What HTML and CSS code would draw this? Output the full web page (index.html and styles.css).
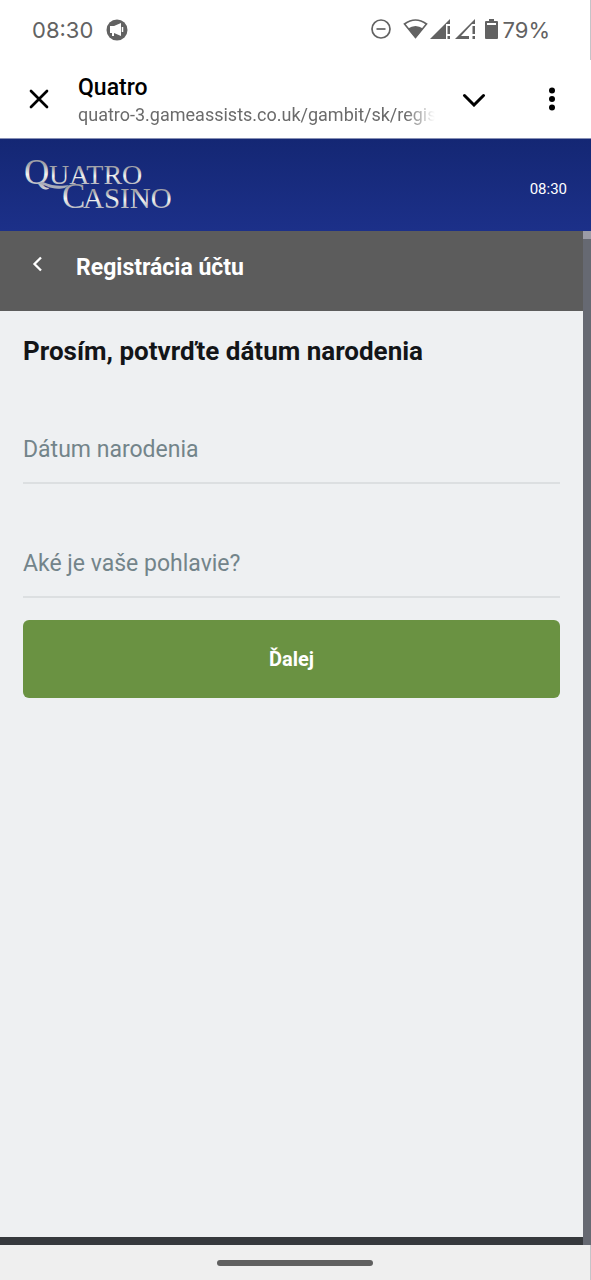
FILE: index.html
```html
<!DOCTYPE html>
<html lang="sk">
<head>
<meta charset="utf-8">
<meta name="viewport" content="width=device-width, initial-scale=1">
<title>Quatro</title>
<link rel="stylesheet" href="styles.css">
</head>
<body>
<div class="screen">
  <div class="status">
    <span class="status-time">08:30</span>
    <svg class="status-app" width="22" height="22" viewBox="0 0 22 22" aria-hidden="true">
      <circle cx="11" cy="11" r="10.5" fill="#626262"/>
      <path d="M4 7h4l7-3v13l-7-3v3H6v-3H4z" fill="#fff"/>
      <path d="M16.500 8v5" stroke="#fff" stroke-width="1.500"/>
    </svg>
    <svg class="status-icons" width="130" height="24" viewBox="0 0 130 24" aria-hidden="true">
      <g fill="none" stroke="#626262" stroke-width="1.700">
        <circle cx="11" cy="11" r="9"/>
        <path d="M6.500 11h9"/>
        <path d="M34.500 6Q45.500-2 56.500 6L45.500 19.500z"/>
      </g>
      <g fill="#626262">
        <path d="M38 10.500Q45.500 5.500 53 10.500L45.500 20z"/>
        <path d="M60 21L80 1v5h-4v15z"/>
        <path d="M77.500 8h2.500v8h-2.500zM77.500 18h2.500v3h-2.500zM102.500 8h2.500v8h-2.500zM102.500 18h2.500v3h-2.500z"/>
        <path d="M85 21L105 1v5h-3L91 18h8v3z"/>
        <path fill-rule="evenodd" d="M119 1h5v2h3q1 0 1 1v16q0 1-1 1h-11q-1 0-1-1V4q0-1 1-1h3zM117 5v2h9V5z"/>
      </g>
    </svg>
    <span class="status-battery">79%</span>
  </div>

  <div class="toolbar">
    <button class="icon-button" type="button" aria-label="Zavrieť">
      <svg width="22" height="22" viewBox="0 0 22 22"><path d="M3 3l16 16M19 3L3 19" stroke="#000" stroke-width="2.700" stroke-linecap="round"/></svg>
    </button>
    <div class="page-info">
      <div class="page-title">Quatro</div>
      <div class="page-url">quatro-3.gameassists.co.uk/gambit/sk/regis</div>
    </div>
    <button class="icon-button" type="button" aria-label="Rozbaliť">
      <svg width="24" height="16" viewBox="0 0 24 16"><path d="M2.500 4.500L12 14l9.500-9.500" fill="none" stroke="#000" stroke-width="3" stroke-linecap="round"/></svg>
    </button>
    <button class="icon-button" type="button" aria-label="Viac">
      <svg width="8" height="24" viewBox="0 0 8 24"><circle cx="4" cy="3.500" r="3"/><circle cx="4" cy="12" r="3"/><circle cx="4" cy="20.500" r="3"/></svg>
    </button>
  </div>

  <header class="brand">
    <svg class="logo" width="152" height="56" viewBox="0 0 152 56" role="img" aria-label="Quatro Casino">
      <defs>
        <linearGradient id="silver" x1="0" y1="0" x2="0" y2="1">
          <stop offset="0" stop-color="#8d8f9b"/>
          <stop offset=".3" stop-color="#a5a6ac"/>
          <stop offset=".55" stop-color="#f4f4f2"/>
          <stop offset=".8" stop-color="#b9bac2"/>
          <stop offset="1" stop-color="#dcdce0"/>
        </linearGradient>
      </defs>
      <g class="logo-text" fill="url(#silver)">
        <text class="logo-large" x="0" y="27">Q</text>
        <text class="logo-first" x="25" y="27">UATRO</text>
        <text class="logo-large" x="38" y="51">C</text>
        <text class="logo-second" x="59" y="51">ASINO</text>
      </g>
      <path d="M13 26C22 28 27 33 38 31.500C42 31 43 29 45 28C40 28.500 31 30.500 19 25z" fill="#a9adba"/>
    </svg>
    <span class="clock">08:30</span>
  </header>

  <div class="viewport">
    <div class="page">
      <div class="heading">
        <button class="back" type="button" aria-label="Späť">
          <svg width="12" height="18" viewBox="0 0 12 18"><path d="M9 2.500L2.500 9L9 15.500" fill="none" stroke="#fff" stroke-width="2.300"/></svg>
        </button>
        <h1 class="heading-title">Registrácia účtu</h1>
      </div>
      <form class="form">
        <h2 class="form-title">Prosím, potvrďte dátum narodenia</h2>
        <input class="field" type="text" placeholder="Dátum narodenia" aria-label="Dátum narodenia">
        <select class="field" aria-label="Aké je vaše pohlavie?">
          <option>Aké je vaše pohlavie?</option>
        </select>
        <button class="submit" type="button">Ďalej</button>
      </form>
      <div class="page-end"></div>
    </div>
    <div class="scrollbar"><div class="thumb"></div></div>
  </div>

  <div class="nav"><div class="nav-handle"></div></div>
</div>
</body>
</html>
```
FILE: styles.css
```css
* {
  box-sizing: border-box;
}

body {
  margin: 0;
  font-family: Roboto, sans-serif;
  background: #fff;
}

button {
  padding: 0;
  border: 0;
  background: none;
  font-family: inherit;
}

svg {
  display: block;
}

.screen {
  display: flex;
  flex-direction: column;
  min-height: 100vh;
}

.status {
  display: flex;
  align-items: center;
  height: 60px;
  padding: 0 40px 0 32px;
  border-right: 1px solid #c4c4c8;
  font-family: Inter, sans-serif;
  font-size: 22px;
  color: #626262;
}

.status-app {
  margin-left: 13px;
}

.status-icons {
  margin-left: auto;
}

.status-battery {
  margin-left: 3px;
}

.toolbar {
  display: flex;
  align-items: center;
  height: 79px;
  border-bottom: 1px solid #8790b5;
}

.icon-button {
  display: flex;
  flex: none;
  align-items: center;
  justify-content: center;
  width: 78px;
  height: 78px;
}

.page-info {
  flex: 1;
  min-width: 0;
  padding-top: 3px;
}

.page-title {
  font-size: 23px;
  font-weight: 500;
  line-height: 28px;
  color: #000;
}

.page-url {
  overflow: hidden;
  font-size: 18px;
  line-height: 26px;
  white-space: nowrap;
  color: #6b6b6b;
  mask-image: linear-gradient(to right, #000 calc(100% - 30px), transparent);
}

.brand {
  display: flex;
  align-items: center;
  justify-content: space-between;
  height: 92px;
  padding: 0 24px;
  background: linear-gradient(#142774, #1c3089);
}

.logo {
  overflow: visible;
}

.logo-text {
  font-family: "Liberation Serif", serif;
}

.logo-large {
  font-size: 35px;
}

.logo-first {
  font-size: 28px;
}

.logo-second {
  font-size: 29px;
}

.clock {
  padding-top: 7px;
  font-size: 15px;
  color: #fff;
}

.viewport {
  display: flex;
  flex: 1;
}

.page {
  display: flex;
  flex: 1;
  flex-direction: column;
  background: #eef0f2;
}

.heading {
  display: flex;
  align-items: center;
  height: 80px;
  padding: 0 32px 8px;
  background: #5c5c5c;
}

.back {
  width: 44px;
  padding-bottom: 6px;
}

.heading-title {
  margin: 0;
  font-size: 23px;
  font-weight: 700;
  color: #fff;
}

.form {
  display: flex;
  flex: 1;
  flex-direction: column;
  padding: 24px 23px;
}

.form-title {
  margin: 0 0 50px;
  font-size: 26px;
  font-weight: 700;
  line-height: 32px;
  color: #131518;
}

.field {
  width: 100%;
  height: 67px;
  margin: 0 0 47px;
  padding: 0;
  border: 0;
  border-bottom: 2px solid #dcdfe1;
  border-radius: 0;
  background: none;
  appearance: none;
  font-family: inherit;
  font-size: 23px;
  color: #73848a;
}

.field::placeholder {
  color: #73848a;
  opacity: 1;
}

select.field {
  margin-bottom: 22px;
}

.submit {
  height: 78px;
  border-radius: 6px;
  background: #6a9242;
  font-size: 20px;
  font-weight: 700;
  color: #fff;
}

.page-end {
  height: 8px;
  background: #36393d;
}

.scrollbar {
  width: 8px;
  background: #666972;
}

.thumb {
  height: 8px;
  background: #9c9ca6;
}

.nav {
  display: flex;
  align-items: center;
  justify-content: center;
  height: 35px;
  border-right: 1px solid #c4c4c8;
  background: #efefef;
}

.nav-handle {
  width: 156px;
  height: 6px;
  border-radius: 3px;
  background: #606060;
}
```
